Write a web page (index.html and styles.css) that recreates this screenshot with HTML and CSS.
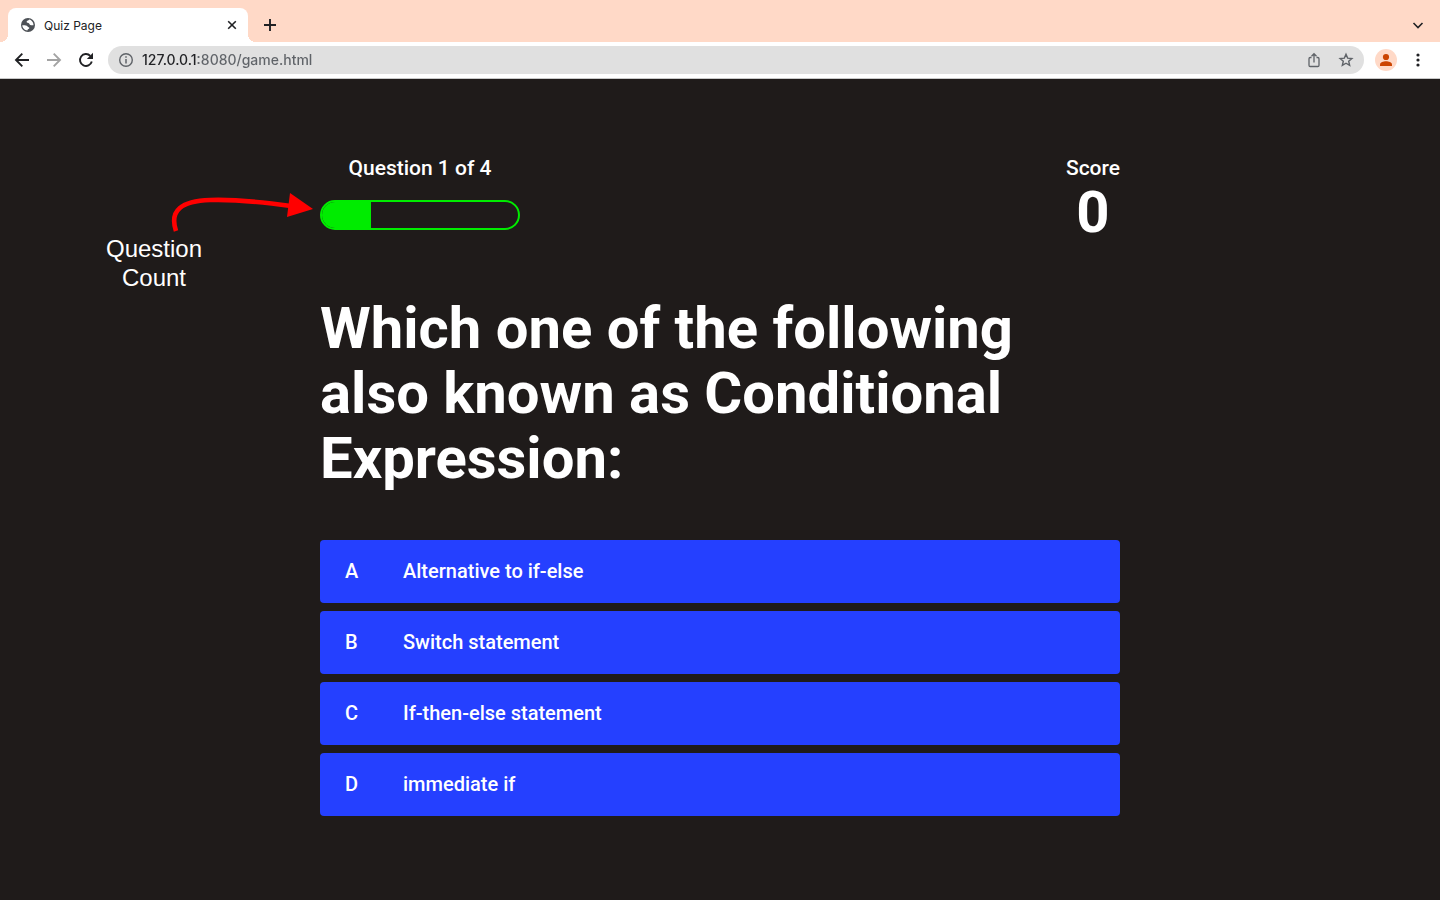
FILE: index.html
```html
<!DOCTYPE html>
<html lang="en">
<head>
<meta charset="utf-8">
<title>Quiz Page</title>
<link rel="stylesheet" href="styles.css">
</head>
<body>
<header class="browser">
  <div class="tab-strip">
    <div class="tab">
      <svg class="tab-icon" width="16" height="16" viewBox="0 0 16 16"><circle cx="8" cy="8" r="7" fill="#4d5156"/><path d="M2.3 8.3 C4 8.2 6.6 8.2 7.4 9.3 C8 10.6 9.4 9.9 9.3 11.2 C9 12 7.6 11.7 7.4 13.4 C4.6 13.3 2.4 11 2.3 8.3Z" fill="#fff"/><path d="M9.2 2.4 C8.5 3.6 7 3.3 6.6 4.6 C6.5 6.3 8.5 5.6 9.3 6.8 C9.8 8.2 11 8.5 13.5 8.3 C13.7 5.6 11.8 3 9.2 2.4Z" fill="#fff"/></svg>
      <span class="tab-title">Quiz Page</span>
      <button class="icon-button tab-close" aria-label="Close tab"><svg width="16" height="16" viewBox="0 0 16 16"><path d="M4.2 4.2l7.6 7.6M11.8 4.2l-7.6 7.6" stroke="#202124" stroke-width="1.6"/></svg></button>
    </div>
    <button class="icon-button" aria-label="New tab"><svg width="16" height="16" viewBox="0 0 16 16"><path d="M8 2v12M2 8h12" stroke="#202124" stroke-width="1.9"/></svg></button>
    <button class="icon-button tab-search" aria-label="Search tabs"><svg width="16" height="16" viewBox="0 0 16 16"><path d="M3.5 6l4.5 4.5L12.5 6" fill="none" stroke="#202124" stroke-width="1.6"/></svg></button>
  </div>
  <div class="toolbar">
    <button class="icon-button" aria-label="Back"><svg width="16" height="16" viewBox="0 0 16 16"><path d="M15 8H2.5M8.3 1.7L2 8l6.3 6.3" fill="none" stroke="#202124" stroke-width="1.9"/></svg></button>
    <button class="icon-button" aria-label="Forward" disabled><svg width="16" height="16" viewBox="0 0 16 16"><path d="M1 8h12.5M7.7 1.7L14 8l-6.3 6.3" fill="none" stroke="#a3a3a3" stroke-width="1.9"/></svg></button>
    <button class="icon-button" aria-label="Reload"><svg width="16" height="16" viewBox="0 0 16 16"><path d="M13.8 9.6A6 6 0 1 1 12.3 3.8" fill="none" stroke="#202124" stroke-width="1.9"/><path d="M15 .8V7H8.8Z" fill="#202124"/></svg></button>
    <div class="address">
      <svg width="16" height="16" viewBox="0 0 16 16"><circle cx="8" cy="8" r="6.3" fill="none" stroke="#5f6368" stroke-width="1.4"/><path d="M8 7v4.5M8 4.3v1.5" stroke="#5f6368" stroke-width="1.5"/></svg>
      <input class="address-input" aria-label="Address" value="127.0.0.1:8080/game.html">
      <button class="icon-button" aria-label="Share"><svg width="16" height="16" viewBox="0 0 16 16"><path d="M5.5 5.5H4.2Q3 5.5 3 6.7v6.6q0 1.2 1.2 1.2h7.6q1.2 0 1.2-1.2V6.7q0-1.2-1.2-1.2h-1.3M8 10.5V2M5.5 4.2L8 1.7l2.5 2.5" fill="none" stroke="#5f6368" stroke-width="1.3"/></svg></button>
      <button class="icon-button" aria-label="Bookmark"><svg width="16" height="16" viewBox="0 0 16 16"><path d="M8 2.2l1.65 3.9 4.25.35-3.2 2.8.95 4.15L8 11.2l-3.65 2.2.95-4.15-3.2-2.8 4.25-.35Z" fill="none" stroke="#5f6368" stroke-width="1.4"/></svg></button>
    </div>
    <button class="profile" aria-label="Profile"><svg width="22" height="22" viewBox="0 0 22 22"><circle cx="11" cy="8" r="3.1" fill="#cc4400"/><path d="M5 17v-1.5c0-2 3.5-3.2 6-3.2s6 1.2 6 3.2V17Z" fill="#cc4400"/></svg></button>
    <button class="icon-button" aria-label="Menu"><svg width="16" height="16" viewBox="0 0 16 16"><g fill="#202124"><circle cx="8" cy="3" r="1.6"/><circle cx="8" cy="8" r="1.6"/><circle cx="8" cy="13" r="1.6"/></g></svg></button>
  </div>
</header>
<main class="page">
  <div class="game">
    <div class="hud">
      <div class="hud-item">
        <p class="hud-label">Question 1 of 4</p>
        <div class="progress" role="progressbar" aria-label="Question 1 of 4" aria-valuenow="1" aria-valuemin="0" aria-valuemax="4"><div class="progress-full" style="width:25%"></div></div>
        <div class="note">
          <svg class="note-arrow" width="147" height="46" viewBox="0 0 147 46"><path d="M11 43C4 22 17 13 45 12 72 11 97 14 126 18" fill="none" stroke="#f00" stroke-width="4.6"/><path d="M125 5L148 21 122 29Z" fill="#f00"/></svg>
          <p class="note-text">Question<br>Count</p>
        </div>
      </div>
      <div class="hud-item">
        <p class="hud-label">Score</p>
        <p class="score">0</p>
      </div>
    </div>
    <h1 class="question">Which one of the following also known as Conditional Expression:</h1>
    <div class="choices">
      <button class="choice"><span class="choice-prefix">A</span><span>Alternative to if-else</span></button>
      <button class="choice"><span class="choice-prefix">B</span><span>Switch statement</span></button>
      <button class="choice"><span class="choice-prefix">C</span><span>If-then-else statement</span></button>
      <button class="choice"><span class="choice-prefix">D</span><span>immediate if</span></button>
    </div>
  </div>
</main>
</body>
</html>
```

FILE: styles.css
```css
* { box-sizing: border-box; }
body {
  margin: 0;
  min-height: 100vh;
  display: flex;
  flex-direction: column;
  background: #1f1b1a;
  font-family: Roboto, "Liberation Sans", sans-serif;
}
p, h1 { margin: 0; }
button { font: inherit; border: 0; cursor: pointer; }
svg { display: block; flex: none; overflow: visible; }

.browser { background: #fff; border-bottom: 1px solid #c8c8c8; }
.tab-strip {
  display: flex;
  align-items: center;
  gap: 14px;
  height: 42px;
  padding: 8px 14px 0 8px;
  background: #ffd9c7;
}
.tab {
  position: relative;
  display: flex;
  align-items: center;
  gap: 8px;
  width: 240px;
  height: 34px;
  padding: 0 8px 0 12px;
  background: #fff;
  border-radius: 8px 8px 0 0;
}
.tab::before, .tab::after {
  content: "";
  position: absolute;
  bottom: 0;
  width: 8px;
  height: 8px;
}
.tab::before { right: 100%; background: radial-gradient(circle at 0 0, transparent 8px, #fff 8px); }
.tab::after { left: 100%; background: radial-gradient(circle at 100% 0, transparent 8px, #fff 8px); }
.tab-title { flex: 1; font: 12px Inter, sans-serif; color: #202124; }
.icon-button { flex: none; padding: 0; background: none; }
.tab-search { margin-left: auto; }

.toolbar {
  display: flex;
  align-items: center;
  gap: 16px;
  height: 36px;
  padding: 0 14px;
}
.address {
  flex: 1;
  display: flex;
  align-items: center;
  gap: 16px;
  height: 28px;
  margin-left: -2px;
  margin-right: -5px;
  padding: 0 10px;
  background: #e0e0e0;
  border-radius: 14px;
}
.address-input {
  flex: 1;
  min-width: 0;
  height: 28px;
  margin-left: -8px;
  padding: 0 0 2px;
  border: 0;
  outline: 0;
  font: 500 14px Inter, sans-serif;
  color: transparent;
  background: linear-gradient(90deg, #202124 56px, #5f6368 56px);
  background-clip: text;
  -webkit-background-clip: text;
}
.profile {
  flex: none;
  padding: 0;
  margin-right: -3px;
  border-radius: 50%;
  background: #ffd9c7;
}

.page {
  flex: 1;
  display: flex;
  flex-direction: column;
  align-items: center;
  padding: 75px 20px 80px;
  color: #fff;
}
.game { width: 100%; max-width: 800px; }
.hud { display: flex; justify-content: space-between; text-align: center; }
.hud-item { position: relative; }
.hud-label { font-size: 21px; font-weight: 500; line-height: 28px; }
.progress {
  width: 200px;
  height: 30px;
  margin-top: 18px;
  border: 2px solid #00ec00;
  border-radius: 15px;
  overflow: hidden;
}
.progress-full { height: 100%; background: #00ec00; }
.score { font-size: 58px; font-weight: 700; line-height: 60px; }
.note { position: absolute; top: 34px; right: 208px; width: 212px; }
.note-arrow { margin-left: auto; }
.note-text {
  width: 108px;
  font: 24px/29px "Liberation Sans", Arial, sans-serif;
}
.question {
  margin: 54px 0 49px;
  font-size: 58px;
  font-weight: 700;
  line-height: 65px;
}
.choices { display: flex; flex-direction: column; gap: 8px; }
.choice {
  display: flex;
  align-items: center;
  min-height: 63px;
  padding: 0 25px 2px;
  border-radius: 4px;
  background: #2540ff;
  color: #fff;
  font-size: 20px;
  font-weight: 500;
  text-align: left;
}
.choice-prefix { width: 58px; }
```
